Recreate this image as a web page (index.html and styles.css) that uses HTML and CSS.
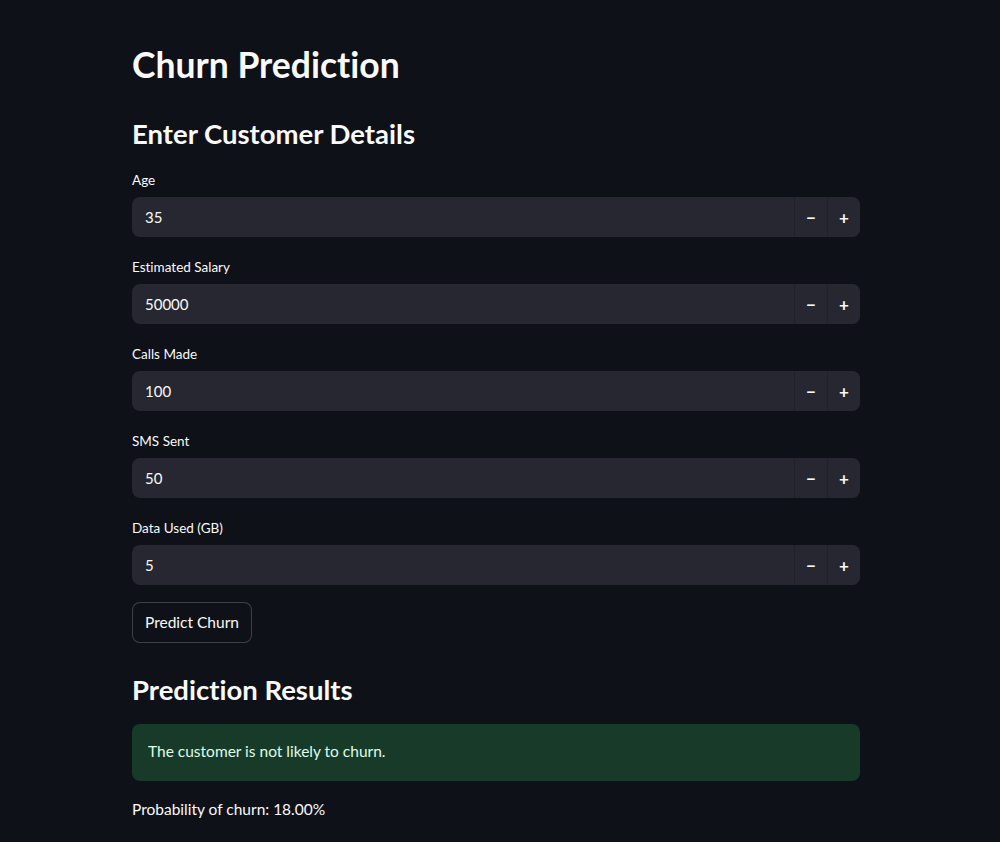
FILE: index.html
```html
<!DOCTYPE html>
<html lang="en">
<head>
  <meta charset="UTF-8">
  <title>Churn Prediction</title>
  <link rel="stylesheet" href="styles.css">
</head>
<body>
  <main class="app">
    <h1>Churn Prediction</h1>

    <h2>Enter Customer Details</h2>

    <div class="field">
      <label for="age">Age</label>
      <div class="number-input">
        <input id="age" type="text" value="35">
        <button class="step">&minus;</button>
        <button class="step">+</button>
      </div>
    </div>

    <div class="field">
      <label for="salary">Estimated Salary</label>
      <div class="number-input">
        <input id="salary" type="text" value="50000">
        <button class="step">&minus;</button>
        <button class="step">+</button>
      </div>
    </div>

    <div class="field">
      <label for="calls">Calls Made</label>
      <div class="number-input">
        <input id="calls" type="text" value="100">
        <button class="step">&minus;</button>
        <button class="step">+</button>
      </div>
    </div>

    <div class="field">
      <label for="sms">SMS Sent</label>
      <div class="number-input">
        <input id="sms" type="text" value="50">
        <button class="step">&minus;</button>
        <button class="step">+</button>
      </div>
    </div>

    <div class="field">
      <label for="data">Data Used (GB)</label>
      <div class="number-input">
        <input id="data" type="text" value="5">
        <button class="step">&minus;</button>
        <button class="step">+</button>
      </div>
    </div>

    <button class="predict">Predict Churn</button>

    <h2 class="results">Prediction Results</h2>

    <div class="alert">The customer is not likely to churn.</div>

    <p class="prob">Probability of churn: 18.00%</p>
  </main>
</body>
</html>
```

FILE: styles.css
```css
body {
  margin: 0;
  background: #0e1117;
  color: #fafafa;
  font-family: Lato, "Noto Sans", sans-serif;
  font-variant-ligatures: none;
}

.app {
  width: 728px;
  padding: 38px 0 0 132px;
}

h1 {
  margin: 0;
  font-size: 35.5px;
  line-height: 53px;
  font-weight: 700;
}

h2 {
  margin: 21px 0 15px;
  font-size: 27.5px;
  line-height: 43px;
  font-weight: 700;
}

.field {
  margin-bottom: 20px;
}

.field label {
  display: block;
  font-size: 13.5px;
  line-height: 20px;
  margin-bottom: 7px;
}

.number-input {
  display: flex;
  height: 40px;
  background: #262730;
  border-radius: 8px;
  overflow: hidden;
}

.number-input input {
  flex: 1;
  min-width: 0;
  border: none;
  outline: none;
  background: transparent;
  color: #fafafa;
  font-family: inherit;
  font-size: 15px;
  padding: 0 13px;
}

.step {
  width: 33px;
  border: none;
  border-left: 1px solid #1f2028;
  background: #262730;
  color: #fafafa;
  font-family: inherit;
  font-size: 17px;
  font-weight: 700;
  padding: 0;
}

.predict {
  margin-top: -3px;
  height: 41px;
  padding: 0 12px 2px;
  background: #0e1117;
  color: #fafafa;
  border: 1px solid rgba(250, 250, 250, 0.2);
  border-radius: 8px;
  font-family: inherit;
  font-size: 15.5px;
}

.results {
  margin: 25px 0 13px;
}

.alert {
  height: 57px;
  box-sizing: border-box;
  padding: 0 16px 3px;
  display: flex;
  align-items: center;
  background: #183b29;
  color: #dffde9;
  border-radius: 8px;
  font-size: 15.5px;
}

.prob {
  margin: 16px 0 0;
  font-size: 15.5px;
  line-height: 24px;
}
```
